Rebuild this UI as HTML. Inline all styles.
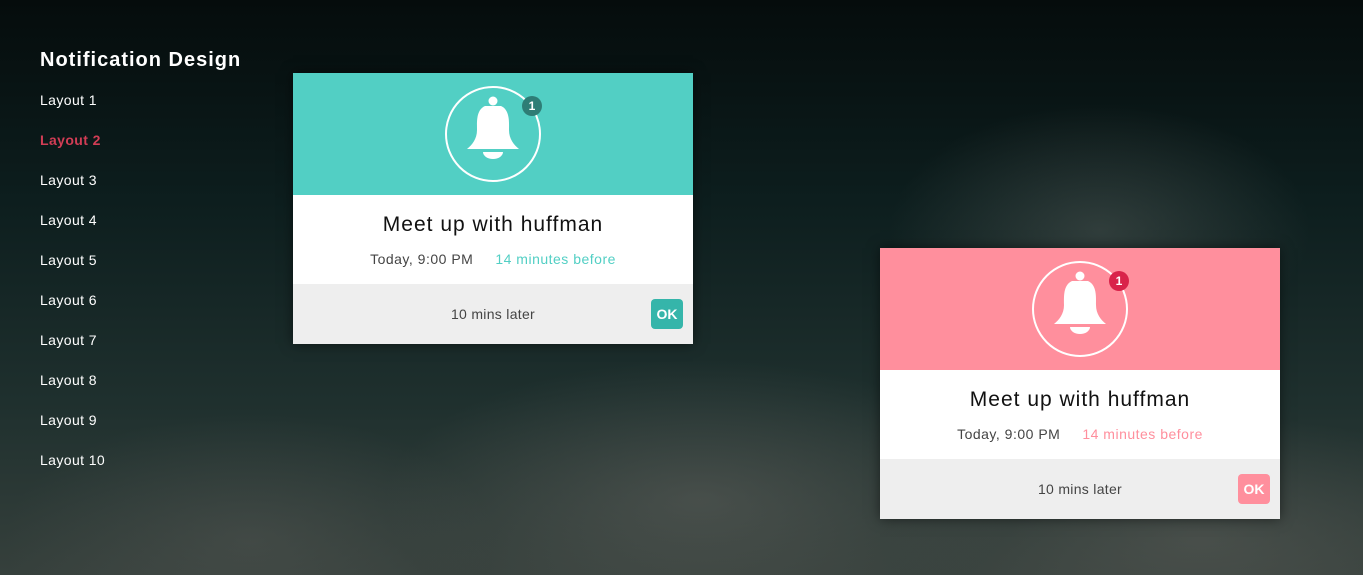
<!DOCTYPE html>
<html><head><style>
*{margin:0;padding:0;box-sizing:border-box}
body{width:1363px;height:575px;overflow:hidden;font-family:"Liberation Sans",sans-serif;position:relative;
background:
radial-gradient(ellipse 300px 180px at 1100px 230px,rgba(110,115,110,.35),transparent 70%),
radial-gradient(ellipse 450px 200px at 700px 500px,rgba(105,105,100,.45),transparent 70%),
radial-gradient(ellipse 350px 180px at 250px 540px,rgba(90,92,88,.4),transparent 70%),
radial-gradient(ellipse 450px 180px at 1200px 540px,rgba(100,100,95,.45),transparent 70%),
linear-gradient(180deg,#050c0c 0%,#0d1e1e 35%,#1f302e 70%,#36403c 100%);}
.nav{position:absolute;left:40px;top:49px;color:#fff}
.nav h1{font-size:20px;font-weight:bold;margin-bottom:22px;letter-spacing:1px}
.nav div{font-size:14px;height:40px;line-height:12px;letter-spacing:.4px}
.nav .act{color:#d23d55;font-weight:bold}
.card{position:absolute;width:400px;height:271px;background:#fff;box-shadow:0 0 12px rgba(0,0,0,.5)}
.hd{height:122px;position:relative}
.circ{position:absolute;left:152px;top:13px;width:96px;height:96px;border:2px solid #fff;border-radius:50%}
.badge{position:absolute;left:229px;top:23px;width:20px;height:20px;border-radius:50%;color:#fff;font-size:12px;font-weight:bold;text-align:center;line-height:20px}
.bell{position:absolute;left:173px;top:23px}
.t{text-align:center;font-size:21px;color:#111;margin-top:18px;letter-spacing:1px}
.s{text-align:center;font-size:14px;color:#444;margin-top:14px;letter-spacing:.5px}
.s span{margin-left:22px}
.ft{position:absolute;left:0;top:211px;width:400px;height:60px;background:#eee;text-align:center;line-height:60px;font-size:14px;color:#444;letter-spacing:.3px}
.ok{position:absolute;right:10px;top:15px;width:32px;height:30px;border-radius:4px;color:#fff;font-weight:bold;font-size:14px;line-height:30px;letter-spacing:0}
</style></head><body>
<div class="nav"><h1>Notification Design</h1>
<div>Layout 1</div><div class="act">Layout 2</div><div>Layout 3</div><div>Layout 4</div><div>Layout 5</div><div>Layout 6</div><div>Layout 7</div><div>Layout 8</div><div>Layout 9</div><div>Layout 10</div></div>

<div class="card" style="left:293px;top:73px">
<div class="hd" style="background:#52cfc4"><div class="circ"></div>
<svg class="bell" width="54" height="64" viewBox="0 0 54 64"><circle cx="27" cy="5" r="4.5" fill="#fff"/><path fill="#fff" d="M19 10C10 14 11 26 11 34C11 43 6 49 1 53H53C48 49 43 43 43 34C43 26 44 14 35 10z"/><path fill="#fff" d="M17 56h20a10 7 0 0 1-20 0z"/></svg>
<div class="badge" style="background:#2e7d76">1</div></div>
<div class="t">Meet up with huffman</div>
<div class="s">Today, 9:00 PM<span style="color:#52cfc4">14 minutes before</span></div>
<div class="ft">10 mins later<div class="ok" style="background:#35b5aa">OK</div></div>
</div>

<div class="card" style="left:880px;top:248px">
<div class="hd" style="background:#ff8f9d"><div class="circ"></div>
<svg class="bell" width="54" height="64" viewBox="0 0 54 64"><circle cx="27" cy="5" r="4.5" fill="#fff"/><path fill="#fff" d="M19 10C10 14 11 26 11 34C11 43 6 49 1 53H53C48 49 43 43 43 34C43 26 44 14 35 10z"/><path fill="#fff" d="M17 56h20a10 7 0 0 1-20 0z"/></svg>
<div class="badge" style="background:#d9234a">1</div></div>
<div class="t">Meet up with huffman</div>
<div class="s">Today, 9:00 PM<span style="color:#ff8f9d">14 minutes before</span></div>
<div class="ft">10 mins later<div class="ok" style="background:#ff8f9d">OK</div></div>
</div>
</body></html>
